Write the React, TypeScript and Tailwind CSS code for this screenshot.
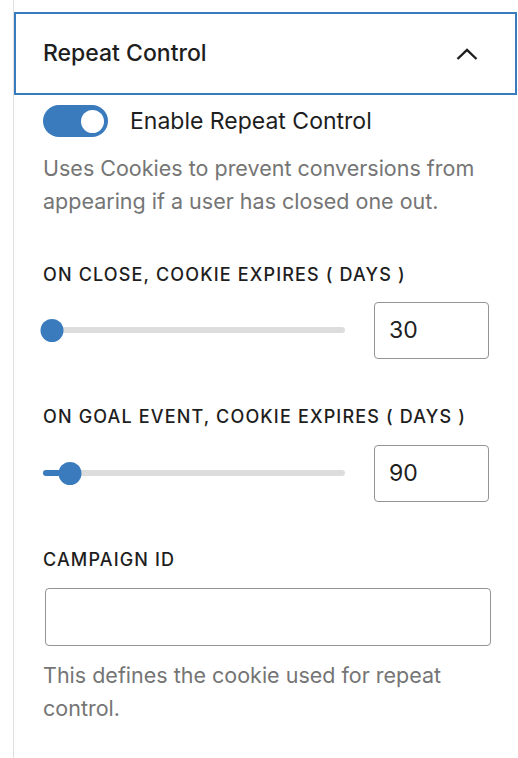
import { useState } from 'react';

const font = { fontFamily: 'Inter, "Liberation Sans", sans-serif' };

function Toggle({ on, onChange }: { on: boolean; onChange: () => void }) {
  return (
    <button
      onClick={onChange}
      className={`relative h-[32px] w-[65px] shrink-0 rounded-full ${on ? 'bg-[#3a7bbd]' : 'bg-[#949494]'}`}
      aria-pressed={on}
    >
      <span className={`absolute top-[4.5px] h-[23px] w-[23px] rounded-full bg-white ${on ? 'left-[38px]' : 'left-[5px]'}`} />
    </button>
  );
}

function RangeRow({ value, percent }: { value: string; percent: number }) {
  return (
    <div className="flex items-center gap-[29px]">
      <div className="relative h-[23px] w-[302px]">
        <div className="absolute left-0 right-0 top-[8.5px] h-[6px] rounded-full bg-[#dddddd]" />
        <div className="absolute left-0 top-[8.5px] h-[6px] rounded-full bg-[#3a7bbd]" style={{ width: `${percent}%` }} />
        <div
          className="absolute top-0 h-[23px] w-[23px] -translate-x-1/2 rounded-full bg-[#3a7bbd]"
          style={{ left: `calc(${percent}% + 9px)` }}
        />
      </div>
      <div className="flex h-[57px] w-[115px] items-center rounded-[4px] border border-[#949494] px-[14px] text-[23px] text-[#1e1e1e]">
        {value}
      </div>
    </div>
  );
}

const labelClass = 'text-[18px] font-medium uppercase leading-[24px] tracking-[1.15px] text-[#1e1e1e]';

export default function App() {
  const [enabled, setEnabled] = useState(true);

  return (
    <div className="h-[758px] w-[518px] overflow-hidden bg-white" style={font}>
      <div className="ml-[13px] h-full border-l border-[#e0e0e0] pt-[12px]">
        <div className="flex h-[83px] w-[503px] items-center justify-between border-2 border-[#3a7bbd] pl-[27px] pr-[37px]">
          <span className="text-[23px] font-medium text-[#1e1e1e]">Repeat Control</span>
          <svg width="22" height="12" viewBox="0 0 22 12" fill="none" stroke="#1e1e1e" strokeWidth="2.4">
            <path d="M1.5 11 L11 2 L20.5 11" />
          </svg>
        </div>

        <div className="pl-[29px] pr-[27px]">
          <div className="mt-[9px] flex items-center gap-[22px]">
            <Toggle on={enabled} onChange={() => setEnabled((prev) => !prev)} />
            <span className="text-[23px] text-[#1e1e1e]">Enable Repeat Control</span>
          </div>
          <p className="mt-[13px] text-[21.5px] leading-[33px] text-[#757575]">
            Uses Cookies to prevent conversions from appearing if a user has closed one out.
          </p>

          <div className={`mt-[45px] ${labelClass}`}>On close, cookie expires ( days )</div>
          <div className="mt-[15px]">
            <RangeRow value="30" percent={0} />
          </div>

          <div className={`mt-[46px] ${labelClass}`}>On goal event, cookie expires ( days )</div>
          <div className="mt-[16px]">
            <RangeRow value="90" percent={6} />
          </div>

          <div className={`mt-[46px] ${labelClass}`}>Campaign ID</div>
          <input className="ml-[2px] mt-[16px] block h-[58px] w-[446px] rounded-[4px] border border-[#949494] px-[14px] text-[23px] outline-none" />
          <p className="mt-[13px] text-[21.5px] leading-[33px] text-[#757575]">
            This defines the cookie used for repeat control.
          </p>
        </div>
      </div>
    </div>
  );
}
